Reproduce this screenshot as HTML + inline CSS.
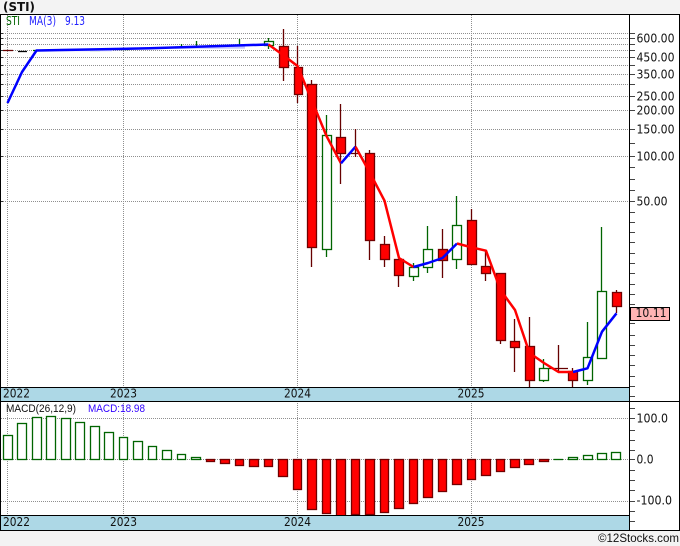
<!DOCTYPE html>
<html><head><meta charset="utf-8"><style>
html,body{margin:0;padding:0;background:#f3f3f3}
svg{display:block}
text{font-family:"DejaVu Sans","Liberation Sans",sans-serif;font-size:12px;fill:#111}
.l{font-family:"Liberation Sans","DejaVu Sans",sans-serif}
</style></head><body>
<svg width="680" height="546" viewBox="0 0 680 546" xmlns="http://www.w3.org/2000/svg">
<rect x="0" y="0" width="680" height="546" fill="#f3f3f3"/>
<rect x="0.5" y="14.5" width="679" height="516" fill="#fff"/>
<g stroke="#8f8f8f" stroke-dasharray="1 1" fill="none" shape-rendering="crispEdges">
<path d="M1 33.5H635M1 38.5H635M1 44.5H635M1 50.5H635M1 57.5H635M1 65.5H635M1 74.5H635M1 84.5H635M1 96.5H635M1 110.5H635M1 129.5H635M1 156.5H635M1 201.5H635M1 418.5H635M1 459.5H635M1 501.5H635"/>
<path d="M7.5 15V530M123.5 15V530M297.5 15V530M471.5 15V530"/>
</g>
<g fill="none" stroke-width="1.3">
<path stroke="#660000" d="M283.5 29V81M297.5 46V103M311.5 80V267M340.5 104V184M355.5 129V157M351 153.5H360M369.5 150V260M384.5 236V267M398.5 259V287M442.5 229V278M471.5 209V265M485.5 251V281M500.5 273V344M514.5 319V372M529.5 317V387M558.5 345V372M549 368.5H568M572.5 368V387M616.5 290V313M3 50.5H13M210.5 45V47"/>
<path stroke="#000" d="M18 51.5H27"/>
<path stroke="#006400" d="M268.5 38V49M326.5 115V257M413.5 263V281M427.5 226V273M456.5 196V269M543.5 359V382M587.5 322V385M601.5 227V292M181.5 44V48M196.5 41V47M239.5 39V46M33 50.5H42M90 50.5H100M120 49.5H129M220 46.5H230"/>
</g>
<g fill="#f00" stroke="#700000" stroke-width="1.3">
<rect x="279.5" y="46.5" width="9" height="21"/>
<rect x="294.5" y="67.5" width="8" height="27"/>
<rect x="307.5" y="84.5" width="9" height="163"/>
<rect x="336.5" y="137.5" width="9" height="16"/>
<rect x="365.5" y="153.5" width="9" height="87"/>
<rect x="380.5" y="244.5" width="9" height="15"/>
<rect x="394.5" y="259.5" width="9" height="16"/>
<rect x="438.5" y="249.5" width="9" height="11"/>
<rect x="467.5" y="220.5" width="9" height="44"/>
<rect x="481.5" y="266.5" width="9" height="7"/>
<rect x="496.5" y="273.5" width="9" height="67"/>
<rect x="510.5" y="341.5" width="9" height="6"/>
<rect x="525.5" y="346.5" width="9" height="34"/>
<rect x="568.5" y="371.5" width="9" height="9"/>
<rect x="612.5" y="292.5" width="9" height="14"/>
</g>
<g fill="#fff" stroke="#006400" stroke-width="1.3">
<rect x="264.5" y="41.5" width="9" height="4"/>
<rect x="322.5" y="135.5" width="9" height="114"/>
<rect x="409.5" y="267.5" width="9" height="9"/>
<rect x="423.5" y="249.5" width="9" height="18"/>
<rect x="452.5" y="225.5" width="9" height="34"/>
<rect x="539.5" y="368.5" width="9" height="12"/>
<rect x="583.5" y="357.5" width="9" height="23"/>
<rect x="597.5" y="291.5" width="9" height="67"/>
</g>
<g fill="none" stroke-width="2.5" stroke-linejoin="round">
<path stroke="#c8c8ff" stroke-width="2.5" d="M60 50H112M175 47.5H245"/>
<path stroke="#00f" d="M7.5 103L22 72L36.5 50.5L150 48.3L268.5 44.5"/>
<path stroke="#f00" d="M268.5 44.5L283 55L297.5 66L312 101L326.5 136L341 163.3"/>
<path stroke="#00f" d="M341 163.3L355.5 146.7"/>
<path stroke="#f00" d="M355.5 146.7L370 173L384.5 200.7L399 258L413.5 267"/>
<path stroke="#00f" d="M413.5 267L428 263L442.5 258L457 243.5"/>
<path stroke="#f00" d="M457 243.5L471.5 247.3L486 250.7L500.5 290L515 310L529.5 353L544 363L558.5 372L573 372"/>
<path stroke="#00f" d="M573 372L587.5 368.3L602 331.7L616.5 313.3"/>
</g>
<g fill="#fff" stroke="#006400" stroke-width="1.3">
<rect x="3.5" y="435.5" width="9" height="24"/>
<rect x="17.5" y="423.5" width="9" height="36"/>
<rect x="32.5" y="417.5" width="9" height="42"/>
<rect x="46.5" y="416.5" width="9" height="43"/>
<rect x="61.5" y="418.5" width="9" height="41"/>
<rect x="75.5" y="422.5" width="9" height="37"/>
<rect x="90.5" y="426.5" width="9" height="33"/>
<rect x="104.5" y="432.5" width="9" height="27"/>
<rect x="119.5" y="437.5" width="8" height="22"/>
<rect x="133.5" y="441.5" width="9" height="18"/>
<rect x="148.5" y="446.5" width="8" height="13"/>
<rect x="162.5" y="450.5" width="9" height="9"/>
<rect x="177.5" y="454.5" width="8" height="5"/>
<rect x="191.5" y="457.5" width="9" height="2"/>
<path d="M553.5 459.5H563"/>
<rect x="568.5" y="457.5" width="9" height="2"/>
<rect x="583.5" y="455.5" width="9" height="4"/>
<rect x="597.5" y="453.5" width="9" height="6"/>
<rect x="611.5" y="452.5" width="9" height="7"/>
</g>
<g fill="#f00" stroke="#700000" stroke-width="1.3">
<rect x="206.5" y="459.5" width="8" height="2"/>
<rect x="220.5" y="459.5" width="9" height="4"/>
<rect x="235.5" y="459.5" width="8" height="6"/>
<rect x="249.5" y="459.5" width="9" height="7"/>
<rect x="264.5" y="459.5" width="8" height="7"/>
<rect x="278.5" y="459.5" width="9" height="17"/>
<rect x="293.5" y="459.5" width="8" height="30"/>
<rect x="307.5" y="459.5" width="9" height="50"/>
<rect x="322.5" y="459.5" width="8" height="54"/>
<rect x="336.5" y="459.5" width="9" height="57"/>
<rect x="351.5" y="459.5" width="8" height="55"/>
<rect x="365.5" y="459.5" width="9" height="55"/>
<rect x="380.5" y="459.5" width="8" height="53"/>
<rect x="394.5" y="459.5" width="9" height="49"/>
<rect x="409.5" y="459.5" width="8" height="44"/>
<rect x="423.5" y="459.5" width="9" height="38"/>
<rect x="438.5" y="459.5" width="8" height="32"/>
<rect x="452.5" y="459.5" width="9" height="25"/>
<rect x="467.5" y="459.5" width="8" height="20"/>
<rect x="481.5" y="459.5" width="9" height="16"/>
<rect x="496.5" y="459.5" width="8" height="12"/>
<rect x="510.5" y="459.5" width="9" height="8"/>
<rect x="524.5" y="459.5" width="9" height="5"/>
<rect x="539.5" y="459.5" width="9" height="2"/>
</g>
<rect x="1" y="388" width="628" height="13" fill="#add8e6"/>
<rect x="1" y="516" width="628" height="14" fill="#add8e6"/>
<g fill="none" shape-rendering="crispEdges">
<path stroke="#444" d="M629 33.5H635M629 38.5H635M629 44.5H635M629 50.5H635M629 57.5H635M629 65.5H635M629 74.5H635M629 84.5H635M629 96.5H635M629 110.5H635M629 129.5H635M629 143.5H635M629 156.5H635M629 167.5H635M629 179.5H635M629 190.5H635M629 201.5H635M629 212.5H635M629 222.5H635M629 232.5H635M629 242.5H635M629 253.5H635M629 263.5H635M629 273.5H635M629 284.5H635M629 294.5H635M629 304.5H635M629 323.5H635M629 335.5H635M629 345.5H635M629 355.5H635M629 365.5H635M629 376.5H635M629 386.5H635M629 396.5H635M629 408.5H635M629 418.5H635M629 430.5H635M629 440.5H635M629 450.5H635M629 459.5H635M629 470.5H635M629 480.5H635M629 490.5H635M629 501.5H635M629 511.5H635M629 521.5H635"/>
<path stroke="#000" d="M0.5 14.5H679.5V530.5H0.5ZM629.5 14.5V530.5M0.5 387.5H629.5M0.5 401.5H679.5M0.5 515.5H629.5"/>
<path stroke="#333" d="M1 33.5H3M1 38.5H3M1 44.5H3M1 50.5H3M1 57.5H3M1 65.5H3M1 74.5H3M1 84.5H3M1 96.5H3M1 110.5H3M1 129.5H3M1 156.5H3M1 201.5H3"/>
</g>
<rect x="630.5" y="307.5" width="39" height="13" fill="#ffb4b4" stroke="#000" shape-rendering="crispEdges"/>
<text x="3" y="11" style="font-weight:bold" textLength="32" lengthAdjust="spacingAndGlyphs">(STI)</text>
<text x="6" y="25" style="fill:#006400" textLength="14" lengthAdjust="spacingAndGlyphs">STI</text>
<text x="29" y="25" style="fill:#2020ff" textLength="27" lengthAdjust="spacingAndGlyphs">MA(3)</text>
<text x="65" y="25" style="fill:#2020ff" textLength="20" lengthAdjust="spacingAndGlyphs">9.13</text>
<text x="636.5" y="42.5" textLength="38" lengthAdjust="spacingAndGlyphs">600.00</text>
<text x="636.5" y="61.5" textLength="38" lengthAdjust="spacingAndGlyphs">450.00</text>
<text x="636.5" y="78.5" textLength="38" lengthAdjust="spacingAndGlyphs">350.00</text>
<text x="636.5" y="100.5" textLength="38" lengthAdjust="spacingAndGlyphs">250.00</text>
<text x="636.5" y="114.5" textLength="38" lengthAdjust="spacingAndGlyphs">200.00</text>
<text x="636.5" y="133.5" textLength="38" lengthAdjust="spacingAndGlyphs">150.00</text>
<text x="636.5" y="160.5" textLength="38" lengthAdjust="spacingAndGlyphs">100.00</text>
<text x="636.5" y="205.5" textLength="31" lengthAdjust="spacingAndGlyphs">50.00</text>
<text x="635.5" y="317" textLength="31" lengthAdjust="spacingAndGlyphs">10.11</text>
<text x="3" y="397.5" textLength="27" lengthAdjust="spacingAndGlyphs">2022</text>
<text x="110" y="397.5" textLength="27" lengthAdjust="spacingAndGlyphs">2023</text>
<text x="284" y="397.5" textLength="27" lengthAdjust="spacingAndGlyphs">2024</text>
<text x="457.5" y="397.5" textLength="27" lengthAdjust="spacingAndGlyphs">2025</text>
<text class="l" x="6" y="412" style="font-size:11px" textLength="70" lengthAdjust="spacingAndGlyphs">MACD(26,12,9)</text>
<text class="l" x="88" y="412" style="fill:#3000ff;font-size:11px" textLength="57" lengthAdjust="spacingAndGlyphs">MACD:18.98</text>
<text x="636.5" y="422.5" textLength="31.5" lengthAdjust="spacingAndGlyphs">100.0</text>
<text x="636.5" y="463.5" textLength="17" lengthAdjust="spacingAndGlyphs">0.0</text>
<text x="636.5" y="504.5" textLength="35.5" lengthAdjust="spacingAndGlyphs">-100.0</text>
<text x="3" y="526" textLength="27" lengthAdjust="spacingAndGlyphs">2022</text>
<text x="110" y="526" textLength="27" lengthAdjust="spacingAndGlyphs">2023</text>
<text x="284" y="526" textLength="27" lengthAdjust="spacingAndGlyphs">2024</text>
<text x="457.5" y="526" textLength="27" lengthAdjust="spacingAndGlyphs">2025</text>
<text class="l" x="598" y="542" style="font-size:12px" textLength="81" lengthAdjust="spacingAndGlyphs">©12Stocks.com</text>
</svg>
</body></html>
